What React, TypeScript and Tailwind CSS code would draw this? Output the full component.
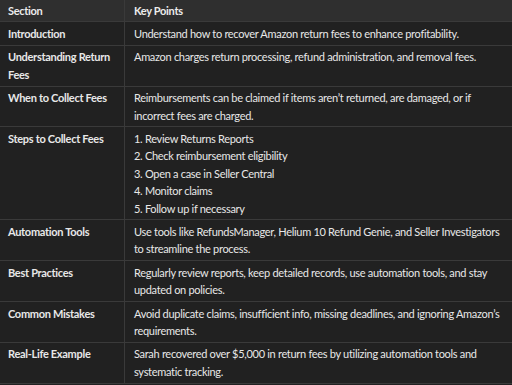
import React from "react";

const rows: { s: string; k: React.ReactNode }[] = [
  { s: "Introduction", k: "Understand how to recover Amazon return fees to enhance profitability." },
  { s: "Understanding Return Fees", k: "Amazon charges return processing, refund administration, and removal fees." },
  { s: "When to Collect Fees", k: "Reimbursements can be claimed if items aren\u2019t returned, are damaged, or if incorrect fees are charged." },
  {
    s: "Steps to Collect Fees",
    k: (
      <>
        <div>1. Review Returns Reports</div>
        <div>2. Check reimbursement eligibility</div>
        <div>3. Open a case in Seller Central</div>
        <div>4. Monitor claims</div>
        <div>5. Follow up if necessary</div>
      </>
    ),
  },
  { s: "Automation Tools", k: "Use tools like RefundsManager, Helium 10 Refund Genie, and Seller Investigators to streamline the process." },
  { s: "Best Practices", k: "Regularly review reports, keep detailed records, use automation tools, and stay updated on policies." },
  { s: "Common Mistakes", k: "Avoid duplicate claims, insufficient info, missing deadlines, and ignoring Amazon\u2019s requirements." },
  { s: "Real-Life Example", k: "Sarah recovered over $5,000 in return fees by utilizing automation tools and systematic tracking." },
];

export default function App() {
  return (
    <div className="w-[512px] h-[385px] bg-[#212121] overflow-hidden text-[11px] leading-[17.4px] tracking-[-0.3px] text-[#e8e8e8]" style={{ fontFamily: 'Lato, sans-serif' }}>
      <div className="grid grid-cols-[125px_1fr] bg-[#2f2f2f] border-b border-[#3a3a3a] font-bold text-[#ececec]">
        <div className="pl-[8px] py-[2px] border-r border-[#3a3a3a]">Section</div>
        <div className="pl-[9px] py-[2px]">Key Points</div>
      </div>
      {rows.map((r, i) => (
        <div key={i} className="grid grid-cols-[125px_1fr] border-b border-[#3a3a3a]">
          <div className="pl-[8px] pr-[8px] py-[2.5px] border-r border-[#3a3a3a] font-bold">{r.s}</div>
          <div className="pl-[9px] pr-[12px] py-[2.5px]">{r.k}</div>
        </div>
      ))}
    </div>
  );
}
